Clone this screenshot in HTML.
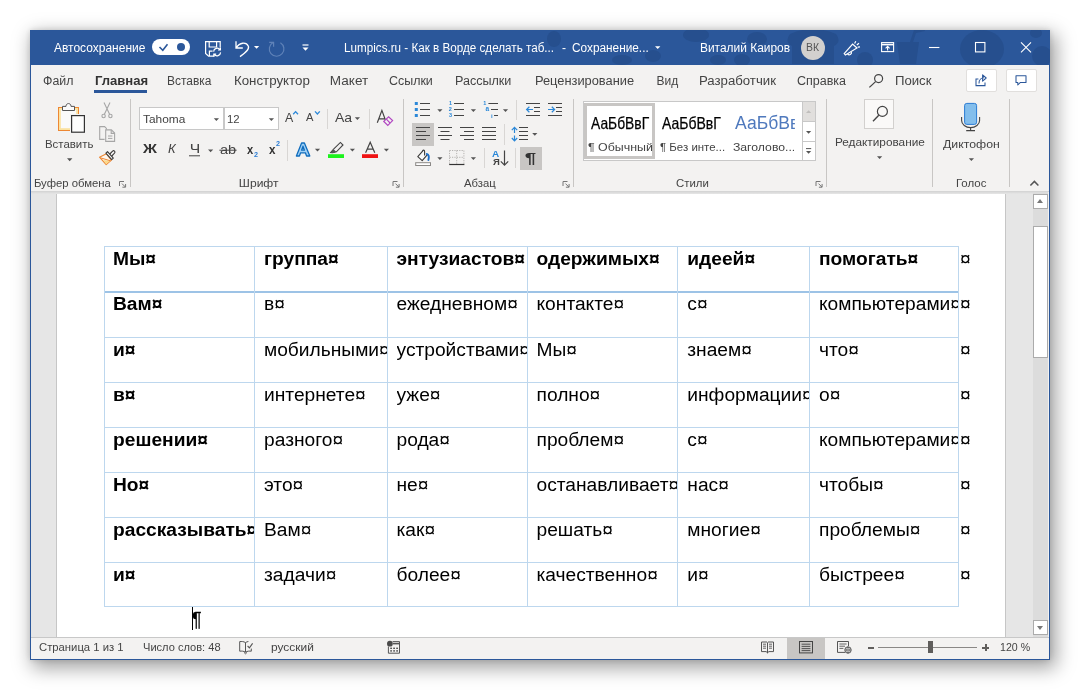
<!DOCTYPE html>
<html lang="ru">
<head>
<meta charset="utf-8">
<title>Lumpics.ru - Как в Ворде сделать таблицу - Word</title>
<style>
html,body{margin:0;padding:0}
body{width:1080px;height:690px;position:relative;overflow:hidden;background:#fff;font-family:"Liberation Sans",sans-serif}
.a{position:absolute}
.t{position:absolute;white-space:nowrap;line-height:1;font-family:"Liberation Sans",sans-serif}
svg{position:absolute;overflow:visible}
#shadow{left:30px;top:30px;width:1020px;height:630px;box-shadow:4px 6px 18px 2px rgba(0,0,0,.37),0 0 6px rgba(0,0,0,.13)}
#win{left:30px;top:30px;width:1018px;height:628px;border:1px solid #2b579a;background:#f3f2f1}
#title{left:30px;top:30px;width:1020px;height:35px;background:#2b579a;overflow:hidden}
#ribbon{left:31px;top:65px;width:1018px;height:126px;background:#f3f2f1}
#ribshadow{left:31px;top:191px;width:1018px;height:3px;background:linear-gradient(#d2d2d2,#e6e6e6)}
#doc{left:31px;top:191px;width:1018px;height:446px;background:#e6e6e6;overflow:hidden}
#page{left:56px;top:191px;width:950px;height:446px;background:#fff;border-left:1px solid #c6c6c6;border-right:1px solid #c6c6c6;box-sizing:border-box}
#status{left:31px;top:637px;width:1018px;height:22px;background:#f3f2f1;border-top:1px solid #c8c8c8;box-sizing:border-box}
.sep{position:absolute;width:1px;background:#c8c6c4}
.sep2{position:absolute;width:1px;background:#d8d6d4}
.box{position:absolute;box-sizing:border-box;background:#fff;border:1px solid #c8c8c8}
.hl{position:absolute;background:#c8c6c4}
.arr{position:absolute;width:0;height:0;border-left:2.5px solid transparent;border-right:2.5px solid transparent;border-top:3px solid #555}
.doc{position:absolute;white-space:nowrap;line-height:1;font-size:19.2px;color:#000;font-family:"Liberation Sans",sans-serif}
.doc b{font-weight:700}
.hline{position:absolute;height:1px;background:#bdd7ee}
.vline{position:absolute;width:1px;background:#bdd7ee}
</style>
</head>
<body>
<div id="root" style="position:absolute;left:0;top:0;width:1080px;height:690px;will-change:transform">
<div class="a" id="shadow"></div>
<div class="a" id="win"></div>
<div class="a" id="title"><svg width="1020" height="34" style="left:0;top:0" fill="#264f8e">
<ellipse cx="524" cy="9" rx="7" ry="8"/>
<ellipse cx="592" cy="30" rx="10" ry="5"/>
<ellipse cx="623" cy="26" rx="8" ry="6"/>
<ellipse cx="666" cy="5" rx="13" ry="7"/>
<ellipse cx="688" cy="30" rx="8" ry="5"/>
<ellipse cx="727" cy="9" rx="10" ry="7"/>
<ellipse cx="712" cy="30" rx="8" ry="6"/>
<path d="M760 4 Q783 -6 806 4 Q812 12 804 16 V34 H762 V16 Q754 12 760 4 Z"/>
<ellipse cx="835" cy="30" rx="8" ry="8"/>
<path d="M867 12 H889 L886 34 H870 Z M880 12 L884 0 L894 -2 L895 1 L886 3 L883 12 Z"/>
<ellipse cx="952" cy="19" rx="22" ry="19"/>
<ellipse cx="1012" cy="26" rx="10" ry="10"/>
<ellipse cx="1006" cy="3" rx="6" ry="5"/>
</svg></div>
<div class="a" id="ribbon"></div>
<div class="a" id="doc"></div>
<div class="a" id="page"></div>
<div class="a" id="ribshadow"></div>
<div class="a" id="status"></div>

<!-- tab underline -->
<div class="a" style="left:94px;top:90px;width:53px;height:3px;background:#2b579a"></div>

<!-- group separators -->
<div class="sep" style="left:130px;top:99px;height:88px"></div>
<div class="sep" style="left:403px;top:99px;height:88px"></div>
<div class="sep" style="left:573px;top:99px;height:88px"></div>
<div class="sep" style="left:826px;top:99px;height:88px"></div>
<div class="sep" style="left:932px;top:99px;height:88px"></div>
<div class="sep" style="left:1009px;top:99px;height:88px"></div>
<!-- small separators -->
<div class="sep2" style="left:327px;top:109px;height:20px"></div>
<div class="sep2" style="left:369px;top:109px;height:20px"></div>
<div class="sep2" style="left:287px;top:140px;height:21px"></div>
<div class="sep2" style="left:516px;top:100px;height:20px"></div>
<div class="sep2" style="left:504px;top:124px;height:21px"></div>
<div class="sep2" style="left:484px;top:148px;height:20px"></div>
<div class="sep2" style="left:515px;top:148px;height:20px"></div>

<!-- font boxes -->
<div class="box" style="left:139px;top:107px;width:85px;height:23px"></div>
<div class="box" style="left:224px;top:107px;width:55px;height:23px"></div>
<!-- highlighted buttons -->
<div class="hl" style="left:412px;top:123px;width:22px;height:23px"></div>
<div class="hl" style="left:520px;top:147px;width:22px;height:23px"></div>
<!-- styles gallery -->
<div class="box" style="left:583px;top:101px;width:233px;height:60px"></div>
<div class="a" style="left:584px;top:103px;width:71px;height:56px;box-sizing:border-box;border:3px solid #c8c6c4;background:#fff"></div>
<div class="a" style="left:802px;top:101px;width:14px;height:21px;box-sizing:border-box;border:1px solid #c8c8c8;background:#e1dfdd"></div>
<div class="a" style="left:802px;top:121px;width:14px;height:21px;box-sizing:border-box;border:1px solid #c8c8c8;background:#fff"></div>
<div class="a" style="left:802px;top:141px;width:14px;height:20px;box-sizing:border-box;border:1px solid #c8c8c8;background:#fff"></div>
<!-- editing icon box -->
<div class="box" style="left:864px;top:99px;width:30px;height:30px;border-color:#d2d0ce;background:#faf9f8"></div>
<!-- share / comment -->
<div class="box" style="left:965.5px;top:68.5px;width:31px;height:23px;border-color:#e1dfdd;border-radius:2px"></div>
<div class="box" style="left:1005.5px;top:68.5px;width:31px;height:23px;border-color:#e1dfdd;border-radius:2px"></div>
<!-- toggle -->
<div class="a" style="left:152px;top:39px;width:38px;height:16px;border-radius:8px;background:#fff"></div>
<div class="a" style="left:177px;top:43px;width:8px;height:8px;border-radius:4px;background:#2b579a"></div>
<!-- avatar -->
<div class="a" style="left:801px;top:36px;width:24px;height:24px;border-radius:12px;background:#d2d0ce"></div>

<!-- scrollbar -->
<div class="a" style="left:1033px;top:192px;width:15px;height:445px;background:#dcdcdc"></div>
<div class="a" style="left:1048px;top:192px;width:1px;height:445px;background:#f3f2f1"></div>
<div class="box" style="left:1033px;top:194px;width:15px;height:15px;border-color:#ababab"></div>
<div class="box" style="left:1033px;top:226px;width:15px;height:132px;border-color:#ababab"></div>
<div class="box" style="left:1033px;top:620px;width:15px;height:15px;border-color:#ababab"></div>
<div class="a" style="left:1037px;top:199.3px;width:0;height:0;border-left:3.5px solid transparent;border-right:3.5px solid transparent;border-bottom:4px solid #777"></div>
<div class="a" style="left:1037px;top:626px;width:0;height:0;border-left:3.5px solid transparent;border-right:3.5px solid transparent;border-top:4px solid #777"></div>

<!-- status view buttons -->
<div class="hl" style="left:787px;top:638px;width:38px;height:21px"></div>
<div class="a" style="left:878px;top:647px;width:99px;height:1px;background:#8a8886"></div>
<div class="a" style="left:928px;top:641px;width:5px;height:12px;background:#605e5c"></div>
<div class="a" style="left:868px;top:646.5px;width:6px;height:2px;background:#605e5c"></div>
<div class="a" style="left:982px;top:646.5px;width:7px;height:2px;background:#605e5c"></div>
<div class="a" style="left:984.5px;top:644px;width:2px;height:7px;background:#605e5c"></div>

<div class="hline" style="left:104px;top:246px;width:855px"></div>
<div class="hline" style="left:104px;top:291px;width:855px;height:2px;background:#9dc3e6"></div>
<div class="hline" style="left:104px;top:337px;width:855px"></div>
<div class="hline" style="left:104px;top:382px;width:855px"></div>
<div class="hline" style="left:104px;top:427px;width:855px"></div>
<div class="hline" style="left:104px;top:472px;width:855px"></div>
<div class="hline" style="left:104px;top:517px;width:855px"></div>
<div class="hline" style="left:104px;top:562px;width:855px"></div>
<div class="hline" style="left:104px;top:606px;width:855px"></div>
<div class="vline" style="left:104px;top:246px;height:361px"></div>
<div class="vline" style="left:254px;top:246px;height:361px"></div>
<div class="vline" style="left:387px;top:246px;height:361px"></div>
<div class="vline" style="left:527px;top:246px;height:361px"></div>
<div class="vline" style="left:677px;top:246px;height:361px"></div>
<div class="vline" style="left:809px;top:246px;height:361px"></div>
<div class="vline" style="left:958px;top:246px;height:361px"></div>
<div class="doc" style="left:113px;top:248.65px;width:141px;overflow:hidden;height:24px"><b>Мы¤</b></div>
<div class="doc" style="left:264px;top:248.65px;width:123px;overflow:hidden;height:24px"><b>группа¤</b></div>
<div class="doc" style="left:396.5px;top:248.65px;width:130.5px;overflow:hidden;height:24px"><b>энтузиастов¤</b></div>
<div class="doc" style="left:536.5px;top:248.65px;width:140.5px;overflow:hidden;height:24px"><b>одержимых¤</b></div>
<div class="doc" style="left:687.3px;top:248.65px;width:121.70000000000005px;overflow:hidden;height:24px"><b>идеей¤</b></div>
<div class="doc" style="left:819px;top:248.65px;width:139px;overflow:hidden;height:24px"><b>помогать¤</b></div>
<div class="doc" style="left:960px;top:248.65px">¤</div>
<div class="doc" style="left:113px;top:293.95px;width:141px;overflow:hidden;height:24px"><b>Вам¤</b></div>
<div class="doc" style="left:264px;top:293.95px;width:123px;overflow:hidden;height:24px">в¤</div>
<div class="doc" style="left:396.5px;top:293.95px;width:130.5px;overflow:hidden;height:24px">ежедневном¤</div>
<div class="doc" style="left:536.5px;top:293.95px;width:140.5px;overflow:hidden;height:24px">контакте¤</div>
<div class="doc" style="left:687.3px;top:293.95px;width:121.70000000000005px;overflow:hidden;height:24px">с¤</div>
<div class="doc" style="left:819px;top:293.95px;width:139px;overflow:hidden;height:24px">компьютерами¤</div>
<div class="doc" style="left:960px;top:293.95px">¤</div>
<div class="doc" style="left:113px;top:339.95px;width:141px;overflow:hidden;height:24px"><b>и¤</b></div>
<div class="doc" style="left:264px;top:339.95px;width:123px;overflow:hidden;height:24px">мобильными¤</div>
<div class="doc" style="left:396.5px;top:339.95px;width:130.5px;overflow:hidden;height:24px">устройствами¤</div>
<div class="doc" style="left:536.5px;top:339.95px;width:140.5px;overflow:hidden;height:24px">Мы¤</div>
<div class="doc" style="left:687.3px;top:339.95px;width:121.70000000000005px;overflow:hidden;height:24px">знаем¤</div>
<div class="doc" style="left:819px;top:339.95px;width:139px;overflow:hidden;height:24px">что¤</div>
<div class="doc" style="left:960px;top:339.95px">¤</div>
<div class="doc" style="left:113px;top:384.95px;width:141px;overflow:hidden;height:24px"><b>в¤</b></div>
<div class="doc" style="left:264px;top:384.95px;width:123px;overflow:hidden;height:24px">интернете¤</div>
<div class="doc" style="left:396.5px;top:384.95px;width:130.5px;overflow:hidden;height:24px">уже¤</div>
<div class="doc" style="left:536.5px;top:384.95px;width:140.5px;overflow:hidden;height:24px">полно¤</div>
<div class="doc" style="left:687.3px;top:384.95px;width:121.70000000000005px;overflow:hidden;height:24px">информации¤</div>
<div class="doc" style="left:819px;top:384.95px;width:139px;overflow:hidden;height:24px">о¤</div>
<div class="doc" style="left:960px;top:384.95px">¤</div>
<div class="doc" style="left:113px;top:429.95px;width:141px;overflow:hidden;height:24px"><b>решении¤</b></div>
<div class="doc" style="left:264px;top:429.95px;width:123px;overflow:hidden;height:24px">разного¤</div>
<div class="doc" style="left:396.5px;top:429.95px;width:130.5px;overflow:hidden;height:24px">рода¤</div>
<div class="doc" style="left:536.5px;top:429.95px;width:140.5px;overflow:hidden;height:24px">проблем¤</div>
<div class="doc" style="left:687.3px;top:429.95px;width:121.70000000000005px;overflow:hidden;height:24px">с¤</div>
<div class="doc" style="left:819px;top:429.95px;width:139px;overflow:hidden;height:24px">компьютерами¤</div>
<div class="doc" style="left:960px;top:429.95px">¤</div>
<div class="doc" style="left:113px;top:474.95px;width:141px;overflow:hidden;height:24px"><b>Но¤</b></div>
<div class="doc" style="left:264px;top:474.95px;width:123px;overflow:hidden;height:24px">это¤</div>
<div class="doc" style="left:396.5px;top:474.95px;width:130.5px;overflow:hidden;height:24px">не¤</div>
<div class="doc" style="left:536.5px;top:474.95px;width:140.5px;overflow:hidden;height:24px">останавливает¤</div>
<div class="doc" style="left:687.3px;top:474.95px;width:121.70000000000005px;overflow:hidden;height:24px">нас¤</div>
<div class="doc" style="left:819px;top:474.95px;width:139px;overflow:hidden;height:24px">чтобы¤</div>
<div class="doc" style="left:960px;top:474.95px">¤</div>
<div class="doc" style="left:113px;top:519.95px;width:141px;overflow:hidden;height:24px"><b>рассказывать¤</b></div>
<div class="doc" style="left:264px;top:519.95px;width:123px;overflow:hidden;height:24px">Вам¤</div>
<div class="doc" style="left:396.5px;top:519.95px;width:130.5px;overflow:hidden;height:24px">как¤</div>
<div class="doc" style="left:536.5px;top:519.95px;width:140.5px;overflow:hidden;height:24px">решать¤</div>
<div class="doc" style="left:687.3px;top:519.95px;width:121.70000000000005px;overflow:hidden;height:24px">многие¤</div>
<div class="doc" style="left:819px;top:519.95px;width:139px;overflow:hidden;height:24px">проблемы¤</div>
<div class="doc" style="left:960px;top:519.95px">¤</div>
<div class="doc" style="left:113px;top:564.95px;width:141px;overflow:hidden;height:24px"><b>и¤</b></div>
<div class="doc" style="left:264px;top:564.95px;width:123px;overflow:hidden;height:24px">задачи¤</div>
<div class="doc" style="left:396.5px;top:564.95px;width:130.5px;overflow:hidden;height:24px">более¤</div>
<div class="doc" style="left:536.5px;top:564.95px;width:140.5px;overflow:hidden;height:24px">качественно¤</div>
<div class="doc" style="left:687.3px;top:564.95px;width:121.70000000000005px;overflow:hidden;height:24px">и¤</div>
<div class="doc" style="left:819px;top:564.95px;width:139px;overflow:hidden;height:24px">быстрее¤</div>
<div class="doc" style="left:960px;top:564.95px">¤</div>
<div class="a" style="left:192px;top:607px;width:1px;height:23px;background:#000"></div>
<svg width="1080" height="690" style="left:0;top:0" fill="none" stroke-linecap="butt">
<!-- toggle check -->
<path d="M159.5 47 L162.8 50.2 L167.5 44.3" stroke="#2b579a" stroke-width="1.6"/>
<!-- save (floppy with sync) -->
<g stroke="#fff" stroke-width="1.2">
<path d="M214.5 56.2 H208.6 L205.6 53.4 V41.6 H220.2 V47.5"/>
<path d="M209.2 41.6 V47 H216.6 V41.6"/>
<path d="M209.4 56 V51.2 H212.6"/>
<path d="M213.6 51.6 A3.6 3.6 0 0 1 220 49.6 M220.4 47.6 V50 H218"/>
<path d="M220.6 52.4 A3.6 3.6 0 0 1 214.2 54.4 M213.8 56.4 V54 H216.2"/>
</g>
<!-- undo -->
<path d="M236 41.2 V48 H242.8 M236.3 47.7 C239.5 42.4 246.2 41.6 248.4 46.2 C249.6 49.6 245 53 240 56.6" stroke="#fff" stroke-width="1.3"/>
<path d="M254 46 H259.2 L256.6 48.8 Z" fill="#fff" stroke="none"/>
<!-- redo (dim) -->
<path d="M273 42.6 A7.3 7.3 0 1 0 280.4 42.7 M269.2 42.4 H273.6 V46.8" stroke="#5f82b8" stroke-width="1.2"/>
<!-- customize QAT -->
<path d="M302.5 45 H308.5" stroke="#fff" stroke-width="1.2"/>
<path d="M302.5 47.4 H308.5 L305.5 50.8 Z" fill="#fff" stroke="none"/>
<!-- save status arrow -->
<path d="M655 46.2 H660.4 L657.7 49 Z" fill="#fff" stroke="none"/>
<!-- megaphone / coming soon -->
<g stroke="#fff" stroke-width="1.2">
<path d="M844.2 53.6 L852.6 44 L857 48 L845.4 55 Z"/>
<path d="M847.6 54 A2.2 2.2 0 0 0 851.4 52"/>
<path d="M854.6 43.6 L855.8 41.2 M856.8 45 L859 43.2 M857.8 47.2 L860 46.8"/>
</g>
<!-- ribbon display options -->
<g stroke="#fff" stroke-width="1.1">
<rect x="881.6" y="42.6" width="12" height="9"/>
<path d="M881.6 44.6 H893.6" stroke-width="1.6"/>
<path d="M887.6 50.4 V46.6 M885.6 48.4 L887.6 46.4 L889.6 48.4"/>
</g>
<!-- min / max / close -->
<path d="M929 47.5 H939.4" stroke="#fff" stroke-width="1.1"/>
<rect x="975.5" y="42.5" width="9.4" height="9.4" stroke="#fff" stroke-width="1.1"/>
<path d="M1021 42.3 L1031 52.3 M1031 42.3 L1021 52.3" stroke="#fff" stroke-width="1.1"/>
</svg>

<svg width="1080" height="690" style="left:0;top:0" fill="none">
<!-- ===== Clipboard group ===== -->
<!-- paste -->
<rect x="58.5" y="107.5" width="20" height="23" fill="#fbe2a0" stroke="#ed8733" stroke-width="1"/>
<rect x="60.8" y="109.8" width="15.4" height="18.4" fill="#fafafa" stroke="none"/>
<path d="M62.5 110.5 V106.4 H66 C66 102.6 71 102.6 71 106.4 H74.5 V110.5 Z" fill="#fafafa" stroke="#555" stroke-width="1"/>
<rect x="70" y="114" width="16" height="20" fill="#f3f2f1" stroke="none"/>
<rect x="71.6" y="115.6" width="12.8" height="16.6" fill="#fdfdfd" stroke="#333" stroke-width="1.2"/>
<path d="M67 158.3 H72.4 L69.7 161.2 Z" fill="#555"/>
<!-- cut -->
<g stroke="#a6a6a6" stroke-width="1.1">
<path d="M104 102.6 L109.6 114.2 M110 102.6 L104.4 114.2"/>
<circle cx="103.6" cy="116" r="1.7"/><circle cx="110.4" cy="116" r="1.7"/>
</g>
<!-- copy -->
<g stroke="#a6a6a6" stroke-width="1.1">
<path d="M104.6 139.4 H99.7 V126.6 H104.6 L106.4 128.4 V129.5"/>
<path d="M105.7 129.9 H111.4 L114.6 133.1 V141.4 H105.7 Z"/>
<path d="M111.2 130 V133.4 H114.4"/>
<path d="M108 136 H112.4 M108 138.4 H112.4" stroke-width="1"/>
</g>
<!-- format painter -->
<path d="M106.4 153.8 L99.5 157.2 L106.2 164.6 L111.4 160.2 Z" fill="#fdf6ee" stroke="#ed8733" stroke-width="1.1" stroke-linejoin="round"/>
<path d="M103 160 L106.2 164.2 L110 160.9 Z" fill="#fbd98a" stroke="none"/>
<path d="M100.4 157.8 L110.4 160.8" stroke="#ed8733" stroke-width="1"/>
<path transform="translate(-.6 .6)" d="M110.4 153.4 L113.2 150.6 A1.3 1.3 0 0 1 115.2 152.4 L112.4 155.4" fill="#fafafa" stroke="#3b3a39" stroke-width="1.1"/>
<path transform="translate(-.6 .6)" d="M106.5 152.6 L108.1 151.1 L113.9 157.6 L112.3 159.1 Z" fill="#fafafa" stroke="#3b3a39" stroke-width="1.1" stroke-linejoin="round"/>

<!-- ===== Font group ===== -->
<path d="M213.8 118.2 H219 L216.4 121 Z" fill="#555"/>
<path d="M268.8 118.2 H274 L271.4 121 Z" fill="#555"/>
<!-- grow/shrink carets -->
<path d="M293.2 114.2 L295.6 111.6 L298 114.2" stroke="#2b88d8" stroke-width="1.3"/>
<path d="M315 111.4 L317.4 114 L319.8 111.4" stroke="#2b88d8" stroke-width="1.3"/>
<path d="M354.8 117.2 H360 L357.4 120 Z" fill="#555"/>
<!-- clear formatting -->
<path d="M377.3 122.8 L381.9 110.4 L386.4 122.8 M378.8 118.8 H385" stroke="#444" stroke-width="1.2"/>
<path d="M383.8 121.4 L388.6 116.8 L392.6 120.6 L387.8 125.4 Z" fill="#f3f2f1" stroke="#b146c2" stroke-width="1.2"/>
<path d="M386.4 119.2 L390 123" stroke="#b146c2" stroke-width="1.1"/>
<!-- underline -->
<path d="M189 155.8 H200" stroke="#444" stroke-width="1"/>
<path d="M208 149.4 H213.2 L210.6 152.2 Z" fill="#555"/>
<!-- strikethrough -->
<path d="M219.4 150.2 H236.6" stroke="#444" stroke-width="1"/>
<!-- text effects A -->
<path d="M296.4 156 L301.6 143 H304.4 L309.8 156 H306.6 L305.4 152.8 H300.6 L299.4 156 Z M301.6 150.2 H304.4 L303 146.2 Z" fill="#9fd0f5" stroke="#0f6cbd" stroke-width="1.3" stroke-linejoin="round"/>
<path d="M314.9 148.8 H320.1 L317.5 151.6 Z" fill="#555"/>
<!-- highlighter -->
<path d="M330.6 152.6 L333.6 149 L340.4 142.4 L343 145 L336.4 151.8 L332.8 152.8 Z" fill="#f3f2f1" stroke="#444" stroke-width="1.1"/>
<path d="M330.4 152.8 L333.6 149.2 L336.2 151.8 L333 153 Z" fill="#555" stroke="none"/>
<rect x="328" y="154.2" width="16" height="3.8" fill="#1cf21c"/>
<path d="M349.8 148.8 H355 L352.4 151.6 Z" fill="#555"/>
<!-- font color -->
<path d="M365.6 152.8 L370.2 142.2 L374.8 152.8 M367.2 149.2 H373.2" stroke="#444" stroke-width="1.2"/>
<rect x="362" y="154.2" width="16" height="3.8" fill="#f01414"/>
<path d="M383.8 148.8 H389 L386.4 151.6 Z" fill="#555"/>

<!-- ===== Paragraph group ===== -->
<g stroke="#444" stroke-width="1">
<!-- bullets -->
<path d="M420 103.5 H430 M420 109.5 H430 M420 115.5 H430"/>
<!-- numbering -->
<path d="M454 103.5 H464 M454 109.5 H464 M454 115.5 H464"/>
<!-- multilevel -->
<path d="M488.4 103.5 H498 M491 109.5 H498 M494 115.5 H498"/>
<!-- decrease indent -->
<path d="M526 103.5 H540 M534 107.5 H540 M534 111.5 H540 M526 115.5 H540"/>
<!-- increase indent -->
<path d="M548 103.5 H562 M556 107.5 H562 M556 111.5 H562 M548 115.5 H562"/>
<!-- align left -->
<path d="M416 127.5 H430 M416 131.5 H426 M416 135.5 H430 M416 139.5 H426"/>
<!-- center -->
<path d="M438 127.5 H452 M440.5 131.5 H449.5 M438 135.5 H452 M440.5 139.5 H449.5"/>
<!-- right -->
<path d="M460 127.5 H474 M464 131.5 H474 M460 135.5 H474 M464 139.5 H474"/>
<!-- justify -->
<path d="M482 127.5 H496 M482 131.5 H496 M482 135.5 H496 M482 139.5 H496"/>
<!-- line spacing -->
<path d="M519 127.5 H528 M519 131.5 H528 M519 135.5 H528 M519 139.5 H528"/>
</g>
<g fill="#2b88d8">
<rect x="414.8" y="102" width="3" height="3"/><rect x="414.8" y="108" width="3" height="3"/><rect x="414.8" y="114" width="3" height="3"/>
</g>
<g stroke="#2b88d8" stroke-width="1.2">
<path d="M533 109.5 H526.6 M529.4 106.8 L526.6 109.5 L529.4 112.2"/>
<path d="M548 109.5 H554.6 M551.8 106.8 L554.6 109.5 L551.8 112.2"/>
<path d="M514.5 127.4 V133 M514.5 135.4 V140.8 M511.8 130.2 L514.5 127.4 L517.2 130.2 M511.8 138 L514.5 140.8 L517.2 138"/>
</g>
<g fill="#555">
<path d="M437.3 109.2 H442.5 L439.9 112 Z"/>
<path d="M470.8 109.2 H476 L473.4 112 Z"/>
<path d="M502.9 109.2 H508.1 L505.5 112 Z"/>
<path d="M532.2 133 H537.4 L534.8 135.8 Z"/>
<path d="M437.3 157.2 H442.5 L439.9 160 Z"/>
<path d="M470.8 157.2 H476 L473.4 160 Z"/>
</g>
<!-- shading bucket -->
<path d="M422.6 151.2 L417.8 156.6 L422.2 160.6 L427.2 154.8" fill="#fafafa" stroke="#3b3a39" stroke-width="1.1" stroke-linejoin="round"/>
<path d="M422.4 151.6 C422.6 149.6 424.6 149.6 424.6 151.6 V155.6" stroke="#3b3a39" stroke-width="1.1"/>
<path d="M426.8 154 C429 154.4 429.2 157 428.4 160" stroke="#1e6fc8" stroke-width="1.9" stroke-linecap="round"/>
<rect x="415.7" y="162.7" width="14.8" height="2.8" fill="#fff" stroke="#8a8886" stroke-width="1"/>
<!-- borders -->
<g stroke="#b5b3b1" stroke-width="1" stroke-dasharray="1.2 1.2">
<path d="M449.6 150.5 H464 M449.5 150.5 V164 M463.9 150.5 V164 M449.6 157.3 H464 M456.7 150.5 V164"/>
</g>
<path d="M449.2 164.5 H464.4" stroke="#333" stroke-width="1.2"/>
<!-- sort arrow -->
<path d="M504.5 150.6 V165 M500.8 161.4 L504.5 165.2 L508.2 161.4" stroke="#444" stroke-width="1.2"/>

<!-- ===== styles gallery scroll ===== -->
<path d="M806 113 L808.6 110.2 L811.2 113 Z" fill="#c0bebc"/>
<path d="M806 131 H811.2 L808.6 133.8 Z" fill="#555"/>
<path d="M806 148.6 H811.2" stroke="#555" stroke-width="1"/>
<path d="M806 151 H811.2 L808.6 153.8 Z" fill="#555"/>

<!-- ===== launchers ===== -->
<g stroke="#777" stroke-width="1">
<path id="ln" d="M119.5 186 V181.5 H124 M122 183.6 L125.4 187 M125.6 184 V187.2 H122.4"/>
<path d="M393 186 V181.5 H397.5 M395.5 183.6 L398.9 187 M399.1 184 V187.2 H395.9"/>
<path d="M563 186 V181.5 H567.5 M565.5 183.6 L568.9 187 M569.1 184 V187.2 H565.9"/>
<path d="M816 186 V181.5 H820.5 M818.5 183.6 L821.9 187 M822.1 184 V187.2 H818.9"/>
</g>
<!-- collapse ribbon chevron -->
<path d="M1030.4 185.6 L1034.4 181.4 L1038.4 185.6" stroke="#555" stroke-width="1.5"/>

<!-- ===== search icon in tab row ===== -->
<circle cx="878.6" cy="78.6" r="4" stroke="#444" stroke-width="1.2"/>
<path d="M875.6 81.6 L869.4 87.4" stroke="#444" stroke-width="1.3"/>
<!-- share -->
<g stroke="#2b579a" stroke-width="1.05">
<path d="M978.4 79 H976 V85.6 H985 V82.6"/>
<path d="M979 83.4 C979 79.6 981.6 77.8 984 77.8 M982.6 74.8 L986.2 78 L982.6 81.2 Z" stroke-linejoin="round"/>
</g>
<!-- comment -->
<path d="M1016 75.8 H1026 V82.4 H1020.4 L1017.8 85 V82.4 H1016 Z" stroke="#2b579a" stroke-width="1.05" stroke-linejoin="round"/>
<!-- editing magnifier -->
<circle cx="882.4" cy="111.4" r="5" stroke="#444" stroke-width="1.2"/>
<path d="M878.8 115.2 L873 121.2" stroke="#444" stroke-width="1.4"/>
<path d="M877 156.2 H882.2 L879.6 159 Z" fill="#555"/>
<!-- mic -->
<rect x="964.6" y="103.4" width="12" height="21" rx="2.2" fill="#83beec" stroke="#2b7cd3" stroke-width="1"/>
<path d="M961.6 117 V120.6 A9 7 0 0 0 979.6 120.6 V117 M970.6 127.6 V130.6 M966.2 130.6 H975" stroke="#444" stroke-width="1.1"/>
<path d="M968.8 158.2 H974 L971.4 161 Z" fill="#555"/>
</svg>

<svg width="1080" height="690" style="left:0;top:0" fill="none">
<!-- proofing book -->
<g stroke="#555" stroke-width="1">
<path d="M245.5 642.6 V652 M245.5 642.6 C243.6 641.4 241.6 641.4 239.7 641.6 V651.2 C241.6 651 243.6 651 245.5 652.2 C247.4 651 249.4 651 251.3 651.2 V648.6 M245.5 642.6 C246.4 642 247.4 641.6 248.4 641.5"/>
<path d="M247.6 646 L249.4 647.8 L252.6 643.4" stroke-width="1.1"/>
<path d="M244 652.4 L245.5 653.8 L247 652.4"/>
</g>
<!-- macro -->
<circle cx="389.9" cy="643.7" r="2.9" fill="#4a4a4a"/>
<g stroke="#555" stroke-width="1">
<path d="M392.6 641.6 H399.5 V653.2 H388.4 V646.6"/>
<path d="M393 643.6 H399.4" stroke-width="1.6"/>
</g>
<g fill="#555">
<rect x="390.2" y="647.6" width="1.8" height="1.4"/><rect x="393.2" y="647.6" width="1.8" height="1.4"/><rect x="396.2" y="647.6" width="1.8" height="1.4"/>
<rect x="390.2" y="650.2" width="1.8" height="1.4"/><rect x="393.2" y="650.2" width="1.8" height="1.4"/><rect x="396.2" y="650.2" width="1.8" height="1.4"/>
</g>
<!-- read mode -->
<g stroke="#555" stroke-width="1">
<path d="M767.5 642.4 V653.4 M761.5 642 H767 M768 642 H773.5 M761.5 642 V651.6 H766.4 L767.5 653 L768.6 651.6 H773.5 V642"/>
<path d="M763 644.2 H766 M763 646.2 H766 M763 648.2 H766 M769 644.2 H772 M769 646.2 H772 M769 648.2 H772" stroke-width=".9"/>
</g>
<!-- print layout -->
<g stroke="#444" stroke-width="1">
<rect x="799.5" y="641.5" width="13" height="11.4"/>
<path d="M801.6 644.2 H810.4 M801.6 646.4 H810.4 M801.6 648.6 H810.4 M801.6 650.6 H810.4" stroke-width=".9"/>
</g>
<!-- web layout -->
<g stroke="#555" stroke-width="1">
<path d="M845 652.4 H837.5 V641.5 H848.5 V646"/>
<path d="M839.4 644 H846.6 M839.4 646.2 H845 M839.4 648.4 H843.4" stroke-width=".9"/>
<circle cx="848" cy="650" r="3.2" fill="#f3f2f1"/>
<path d="M845 650 H851 M848 646.8 C846.4 648.6 846.4 651.4 848 653.2 M848 646.8 C849.6 648.6 849.6 651.4 848 653.2" stroke-width=".8"/>
</g>
</svg>

<div class="t" style="left:54.12px;top:41.84px;font-size:12px;color:#fff;transform:scaleX(0.999);transform-origin:0.12px 0;">Автосохранение</div>
<div class="t" style="left:343.50px;top:41.84px;font-size:12px;color:#fff;transform:scaleX(0.972);transform-origin:1.00px 0;">Lumpics.ru - Как в Ворде сделать таб...</div>
<div class="t" style="left:562.00px;top:41.84px;font-size:12px;color:#fff;">-</div>
<div class="t" style="left:571.88px;top:41.84px;font-size:12px;color:#fff;transform:scaleX(0.985);transform-origin:0.62px 0;">Сохранение...</div>
<div class="t" style="left:700.00px;top:41.84px;font-size:12px;color:#fff;transform:scaleX(0.994);transform-origin:1.00px 0;">Виталий Каиров</div>
<div class="t" style="left:806.42px;top:43.14px;font-size:10px;color:#555;transform:scaleX(1.043);transform-origin:0.88px 0;">ВК</div>
<div class="t" style="left:43.00px;top:74.84px;font-size:12px;color:#444;transform:scaleX(1.031);transform-origin:0.75px 0;">Файл</div>
<div class="t" style="left:94.75px;top:74.84px;font-size:12px;color:#333;font-weight:700;transform:scaleX(1.090);transform-origin:0.75px 0;">Главная</div>
<div class="t" style="left:166.50px;top:74.84px;font-size:12px;color:#444;transform:scaleX(0.997);transform-origin:1.00px 0;">Вставка</div>
<div class="t" style="left:233.50px;top:74.84px;font-size:12px;color:#444;transform:scaleX(1.110);transform-origin:1.00px 0;">Конструктор</div>
<div class="t" style="left:330.00px;top:74.84px;font-size:12px;color:#444;transform:scaleX(1.130);transform-origin:1.00px 0;">Макет</div>
<div class="t" style="left:388.88px;top:74.84px;font-size:12px;color:#444;transform:scaleX(1.037);transform-origin:0.62px 0;">Ссылки</div>
<div class="t" style="left:455.00px;top:74.84px;font-size:12px;color:#444;transform:scaleX(1.048);transform-origin:1.00px 0;">Рассылки</div>
<div class="t" style="left:534.50px;top:74.84px;font-size:12px;color:#444;transform:scaleX(1.070);transform-origin:1.00px 0;">Рецензирование</div>
<div class="t" style="left:656.50px;top:74.84px;font-size:12px;color:#444;transform:scaleX(1.000);transform-origin:1.00px 0;">Вид</div>
<div class="t" style="left:699.00px;top:74.84px;font-size:12px;color:#444;transform:scaleX(1.101);transform-origin:1.00px 0;">Разработчик</div>
<div class="t" style="left:796.88px;top:74.84px;font-size:12px;color:#444;transform:scaleX(1.043);transform-origin:0.62px 0;">Справка</div>
<div class="t" style="left:894.50px;top:74.84px;font-size:12px;color:#444;transform:scaleX(1.101);transform-origin:1.00px 0;">Поиск</div>
<div class="t" style="left:44.62px;top:138.69px;font-size:11px;color:#444;transform:scaleX(1.039);transform-origin:0.88px 0;">Вставить</div>
<div class="t" style="left:33.62px;top:178.01px;font-size:10.5px;color:#444;transform:scaleX(1.078);transform-origin:0.88px 0;">Буфер обмена</div>
<div class="t" style="left:142.75px;top:113.69px;font-size:11px;color:#444;transform:scaleX(1.080);transform-origin:0.25px 0;">Tahoma</div>
<div class="t" style="left:226.62px;top:113.69px;font-size:11px;color:#444;transform:scaleX(1.034);transform-origin:0.88px 0;">12</div>
<div class="t" style="left:238.62px;top:178.01px;font-size:10.5px;color:#444;transform:scaleX(1.149);transform-origin:0.88px 0;">Шрифт</div>
<div class="t" style="left:464.00px;top:178.01px;font-size:10.5px;color:#444;transform:scaleX(1.077);transform-origin:0.00px 0;">Абзац</div>
<div class="t" style="left:675.50px;top:178.01px;font-size:10.5px;color:#444;transform:scaleX(1.086);transform-origin:0.50px 0;">Стили</div>
<div class="t" style="left:834.62px;top:136.69px;font-size:11px;color:#444;transform:scaleX(1.073);transform-origin:0.88px 0;">Редактирование</div>
<div class="t" style="left:942.88px;top:138.69px;font-size:11px;color:#444;transform:scaleX(1.118);transform-origin:0.12px 0;">Диктофон</div>
<div class="t" style="left:955.88px;top:178.01px;font-size:10.5px;color:#444;transform:scaleX(1.093);transform-origin:0.88px 0;">Голос</div>
<div class="t" style="left:142.90px;top:142.49px;font-size:13.3px;color:#333;font-weight:700;transform:scaleX(1.158);transform-origin:0.00px 0;">Ж</div>
<div class="t" style="left:167.53px;top:142.32px;font-size:13.5px;color:#444;font-style:italic;transform:scaleX(0.960);transform-origin:0.38px 0;">К</div>
<div class="t" style="left:189.50px;top:142.49px;font-size:13.3px;color:#444;transform:scaleX(1.185);transform-origin:1.00px 0;">Ч</div>
<div class="t" style="left:220.00px;top:143.59px;font-size:12px;color:#444;transform:scaleX(1.212);transform-origin:0.50px 0;">ab</div>
<div class="t" style="left:246.88px;top:142.75px;font-size:13px;color:#333;font-weight:700;transform:scaleX(0.857);transform-origin:0.12px 0;">x</div>
<div class="t" style="left:253.55px;top:152.31px;font-size:6.6px;color:#2b7cd3;font-weight:700;transform:scaleX(1.088);transform-origin:0.25px 0;">2</div>
<div class="t" style="left:268.62px;top:142.75px;font-size:13px;color:#333;font-weight:700;transform:scaleX(0.893);transform-origin:0.12px 0;">x</div>
<div class="t" style="left:275.55px;top:141.01px;font-size:6.6px;color:#2b7cd3;font-weight:700;transform:scaleX(1.088);transform-origin:0.25px 0;">2</div>
<div class="t" style="left:284.88px;top:110.57px;font-size:13.5px;color:#444;transform:scaleX(0.914);transform-origin:0.12px 0;">A</div>
<div class="t" style="left:306.12px;top:112.27px;font-size:11.5px;color:#444;transform:scaleX(0.967);transform-origin:0.12px 0;">A</div>
<div class="t" style="left:335.38px;top:110.57px;font-size:13.5px;color:#444;transform:scaleX(1.038);transform-origin:0.12px 0;">Aa</div>
<div class="t" style="left:590.88px;top:114.78px;font-size:16.5px;color:#000;transform:scaleX(0.838);transform-origin:0.12px 0;-webkit-text-stroke:.25px #000;">АаБбВвГ</div>
<div class="t" style="left:587.62px;top:142.44px;font-size:11px;color:#444;transform:scaleX(1.128);transform-origin:0.38px 0;">¶ Обычный</div>
<div class="t" style="left:662.38px;top:114.78px;font-size:16.5px;color:#000;transform:scaleX(0.849);transform-origin:0.12px 0;-webkit-text-stroke:.25px #000;">АаБбВвГ</div>
<div class="t" style="left:659.62px;top:142.44px;font-size:11px;color:#444;transform:scaleX(1.041);transform-origin:0.38px 0;">¶ Без инте...</div>
<div class="t" style="left:734.50px;top:113.51px;font-size:18px;color:#4f79bd;transform:scaleX(0.975);transform-origin:0.00px 0;clip-path:inset(-5px 4.5px -5px -5px);">АаБбВв</div>
<div class="t" style="left:732.62px;top:142.44px;font-size:11px;color:#444;transform:scaleX(1.110);transform-origin:0.38px 0;">Заголово...</div>
<div class="t" style="left:39.00px;top:641.89px;font-size:11px;color:#444;transform:scaleX(1.026);transform-origin:0.50px 0;">Страница 1 из 1</div>
<div class="t" style="left:142.88px;top:641.89px;font-size:11px;color:#444;transform:scaleX(1.007);transform-origin:0.88px 0;">Число слов: 48</div>
<div class="t" style="left:270.50px;top:641.89px;font-size:11px;color:#444;transform:scaleX(1.086);transform-origin:0.75px 0;">русский</div>
<div class="t" style="left:999.83px;top:641.89px;font-size:11px;color:#444;transform:scaleX(0.964);transform-origin:0.88px 0;">120 %</div>
<div class="t" style="left:449.02px;top:100.94px;font-size:5.5px;color:#2b88d8;font-weight:700;">1</div>
<div class="t" style="left:448.75px;top:107.14px;font-size:5.5px;color:#2b88d8;font-weight:700;">2</div>
<div class="t" style="left:448.88px;top:113.34px;font-size:5.5px;color:#2b88d8;font-weight:700;">3</div>
<div class="t" style="left:483.23px;top:100.94px;font-size:5.5px;color:#2b88d8;font-weight:700;">1</div>
<div class="t" style="left:485.55px;top:106.10px;font-size:6.5px;color:#2b88d8;font-weight:700;">a</div>
<div class="t" style="left:490.93px;top:112.72px;font-size:6px;color:#2b88d8;font-weight:700;">i</div>
<div class="t" style="left:492.15px;top:149.60px;font-size:8.5px;color:#2b88d8;font-weight:700;transform:scaleX(1.173);transform-origin:0.25px 0;">А</div>
<div class="t" style="left:492.88px;top:158.40px;font-size:8.5px;color:#444;font-weight:700;transform:scaleX(1.116);transform-origin:0.12px 0;">Я</div>
<div class="t" style="left:525.40px;top:149.88px;font-size:15.5px;color:#333;font-weight:700;transform:scaleX(1.325);transform-origin:0.50px 0;">¶</div>
<div class="t" style="left:192.15px;top:609.35px;font-size:20.5px;color:#000;transform:scaleX(0.864);transform-origin:0.75px 0;-webkit-text-stroke:.3px #000;">¶</div>
</div>
</body>
</html>
